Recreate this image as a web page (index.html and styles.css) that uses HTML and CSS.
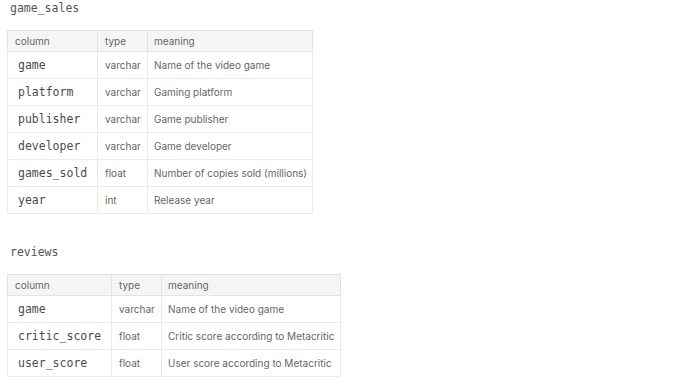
FILE: index.html
```html
<!DOCTYPE html>
<html>
<head>
<meta charset="utf-8">
<link rel="stylesheet" href="styles.css">
</head>
<body>
<div class="page">
  <div class="title">game_sales</div>
  <table class="schema t1">
    <thead><tr><th>column</th><th>type</th><th>meaning</th></tr></thead>
    <tbody>
      <tr><td class="code">game</td><td>varchar</td><td>Name of the video game</td></tr>
      <tr><td class="code">platform</td><td>varchar</td><td>Gaming platform</td></tr>
      <tr><td class="code">publisher</td><td>varchar</td><td>Game publisher</td></tr>
      <tr><td class="code">developer</td><td>varchar</td><td>Game developer</td></tr>
      <tr><td class="code">games_sold</td><td>float</td><td>Number of copies sold (millions)</td></tr>
      <tr><td class="code">year</td><td>int</td><td>Release year</td></tr>
    </tbody>
  </table>
  <div class="title second">reviews</div>
  <table class="schema t2">
    <thead><tr><th>column</th><th>type</th><th>meaning</th></tr></thead>
    <tbody>
      <tr><td class="code">game</td><td>varchar</td><td>Name of the video game</td></tr>
      <tr><td class="code">critic_score</td><td>float</td><td>Critic score according to Metacritic</td></tr>
      <tr><td class="code">user_score</td><td>float</td><td>User score according to Metacritic</td></tr>
    </tbody>
  </table>
</div>
</body>
</html>
```
FILE: styles.css
```css
html, body {
  margin: 0;
  padding: 0;
  background: #ffffff;
}
.page {
  padding: 1px 0 0 7px;
  font-family: Inter, "Noto Sans", sans-serif;
}
.title {
  font-family: "DejaVu Sans Mono", monospace;
  font-size: 11.5px;
  line-height: 14px;
  color: #555;
  margin-left: 3px;
  height: 14px;
}
.title + .schema {
  margin-top: 15px;
}
.title.second {
  margin-top: 31px;
}
.schema {
  border-collapse: collapse;
  border: 1px solid #e3e3e3;
  table-layout: fixed;
}
.schema th,
.schema td {
  box-sizing: border-box;
}
.schema th {
  background: #f5f5f5;
  font-weight: 400;
  font-size: 10px;
  color: #666;
  text-align: left;
  height: 21px;
  padding: 0 6px 0 7px;
  border: 1px solid #e3e3e3;
}
.schema td {
  font-size: 10px;
  color: #666;
  height: 27px;
  padding: 0 6px;
  border: 1px solid #ebebeb;
  white-space: nowrap;
}
.schema td:nth-child(2) {
  padding-left: 7px;
}
.schema th:nth-child(3),
.schema td:nth-child(3) {
  padding-left: 6px;
}
.schema td.code {
  font-family: "DejaVu Sans Mono", monospace;
  font-size: 11.5px;
  color: #4a4a4a;
  padding-left: 10px;
}
.t1 { width: 306px; }
.t1 th:nth-child(1) { width: 90px; }
.t1 th:nth-child(2) { width: 50px; }
.t2 { width: 334px; }
.t2 th:nth-child(1) { width: 104px; }
.t2 th:nth-child(2) { width: 50px; }
```
